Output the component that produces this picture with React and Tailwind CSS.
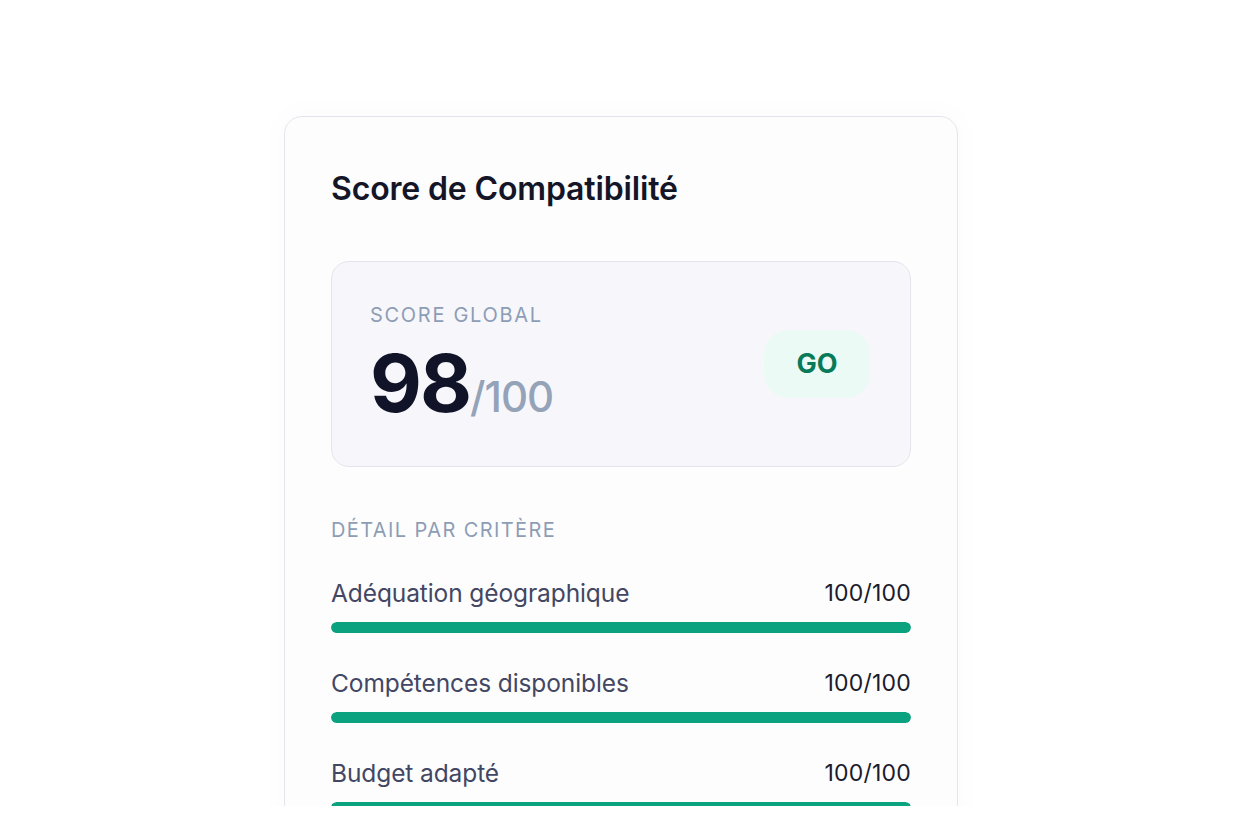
export default function App() {
  const rows = [
    { label: "Adéquation géographique", value: 100 },
    { label: "Compétences disponibles", value: 100 },
    { label: "Budget adapté", value: 100 },
  ];
  return (
    <div className="w-full h-[831px] bg-white" style={{ fontFamily: "Inter, 'Noto Sans', sans-serif" }}>
      <div className="h-[806px] overflow-hidden pt-[116px] pl-[284px]">
        <div className="w-[674px] rounded-[18px] border border-[#e6e5ee] bg-[#fdfdfe] px-[46px] pt-[52px] pb-10 shadow-[0_0_24px_rgba(120,120,160,0.04)]">
          <h2 className="text-[32px] leading-[40px] font-semibold text-[#141628] tracking-[-0.15px]">
            Score de Compatibilité
          </h2>
          <div className="mt-[52px] h-[206px] rounded-[18px] border border-[#e4e4ec] bg-[#f7f7fb] pl-[38px] pr-[40px] flex items-center justify-between">
            <div className="flex flex-col">
              <div className="text-[20px] leading-[24px] tracking-[1.7px] text-[#8d9db5] font-normal">SCORE GLOBAL</div>
              <div className="flex items-baseline mt-[14px]">
                <span className="text-[80px] leading-[84px] font-bold text-[#111428] tracking-[-2px]">98</span>
                <span className="text-[42px] leading-[42px] font-medium text-[#94a3b8] tracking-[-1px]">/100</span>
              </div>
            </div>
            <div className="w-[106px] h-[68px] rounded-[24px] bg-[#ecfaf5] flex items-center justify-center">
              <span className="text-[27px] font-bold text-[#077a5a]">GO</span>
            </div>
          </div>
          <div className="mt-[51px] text-[20px] leading-[24px] tracking-[1.4px] text-[#8d9db5]">DÉTAIL PAR CRITÈRE</div>
          <div className="mt-[36px] flex flex-col gap-[35px]">
            {rows.map((r) => (
              <div key={r.label} className="flex flex-col">
                <div className="flex items-center justify-between">
                  <span className="text-[24.5px] leading-[30px] text-[#434763] tracking-[-0.1px]">{r.label}</span>
                  <span className="text-[23px] leading-[30px] text-[#1a1b2c] tracking-[0.2px]">{r.value}/100</span>
                </div>
                <div className="mt-[14px] h-[11px] rounded-full bg-[#e8eaf0] overflow-hidden">
                  <div className="h-full rounded-full bg-[#0ba37f]" style={{ width: `${r.value}%` }} />
                </div>
              </div>
            ))}
          </div>
        </div>
      </div>
    </div>
  );
}
